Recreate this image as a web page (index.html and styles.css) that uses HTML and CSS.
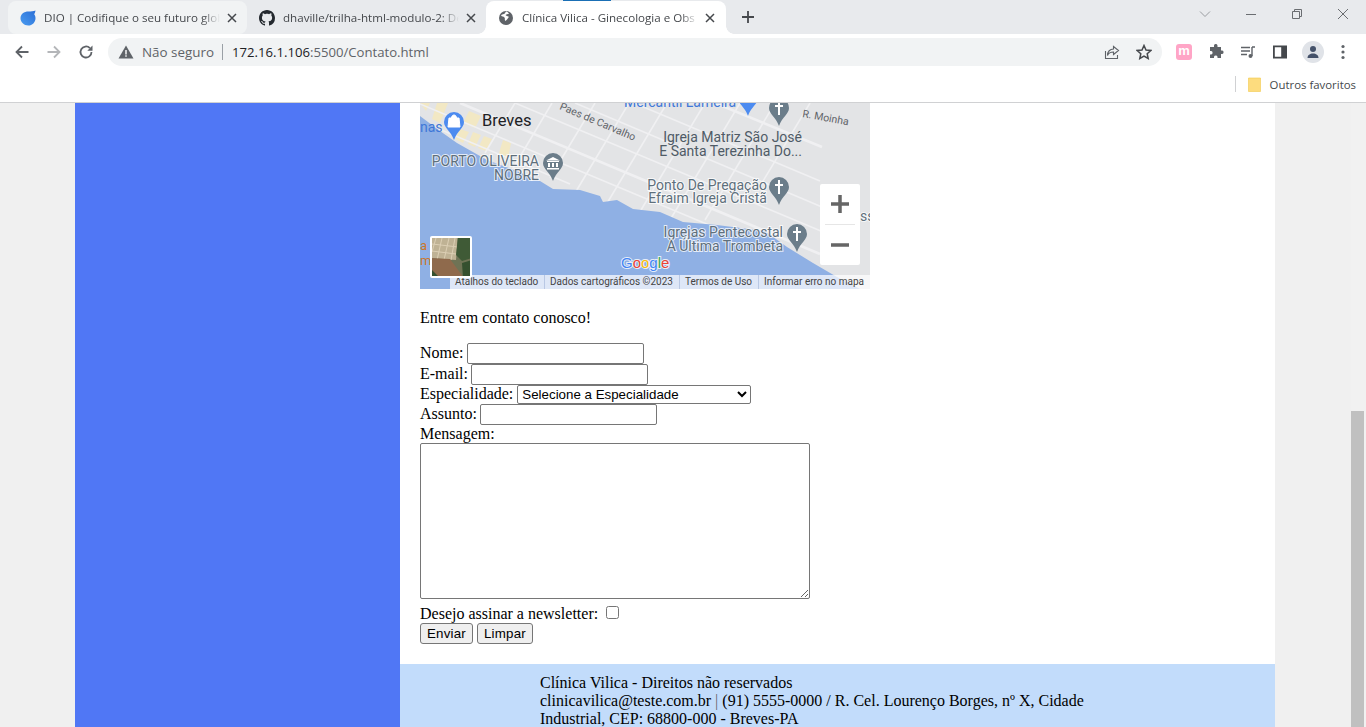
FILE: index.html
```html
<!DOCTYPE html>
<html lang="pt-BR">
<head>
    <meta charset="UTF-8">
    <title>Clínica Vilica - Contato</title>
    <link rel="stylesheet" href="styles.css">
</head>
<body>
<div class="browser">
    <div class="tabstrip">
        <div class="tab tab-hover">
            <svg class="favicon" viewBox="0 0 16 16"><defs><linearGradient id="dio" x1="0" y1="1" x2="1" y2="0"><stop offset="0" stop-color="#4a9cf0"/><stop offset="1" stop-color="#2b6fd6"/></linearGradient></defs><path fill="url(#dio)" d="M15.5.5c-.3 1.800-.8 3-1.300 3.700 1 1.200 1.300 2.600 1.300 4 0 4-3.200 7.300-7.300 7.300C4 15.500.5 12.300.5 8.300.5 4.200 4 1.500 8.500 1.500c2.500 0 5-.3 7-1z"/></svg>
            <span class="tab-title">DIO | Codifique o seu futuro glob</span>
            <svg class="tab-close" viewBox="0 0 10 10"><path d="M1 1l8 8M9 1L1 9" stroke="#45484c" stroke-width="1.500" fill="none"/></svg>
        </div>
        <div class="tab">
            <svg class="favicon" viewBox="0 0 16 16"><path fill="#24292f" d="M8 0C3.580 0 0 3.580 0 8c0 3.540 2.290 6.530 5.470 7.590.4.070.55-.17.55-.38 0-.19-.01-.82-.01-1.490-2.010.37-2.530-.49-2.690-.94-.09-.23-.48-.94-.82-1.130-.28-.15-.68-.52-.01-.53.63-.01 1.080.58 1.230.82.72 1.210 1.870.87 2.330.66.070-.52.28-.87.51-1.070-1.780-.2-3.640-.89-3.640-3.950 0-.87.31-1.590.82-2.150-.08-.2-.36-1.020.08-2.120 0 0 .67-.21 2.200.82.64-.18 1.320-.27 2-.27s1.360.09 2 .27c1.530-1.040 2.200-.82 2.200-.82.44 1.100.16 1.920.08 2.120.51.56.82 1.270.82 2.150 0 3.070-1.870 3.750-3.650 3.950.29.25.54.73.54 1.480 0 1.070-.01 1.930-.01 2.200 0 .21.15.46.55.38A8.010 8.010 0 0 0 16 8c0-4.420-3.580-8-8-8z"/></svg>
            <span class="tab-title">dhaville/trilha-html-modulo-2: De</span>
            <svg class="tab-close" viewBox="0 0 10 10"><path d="M1 1l8 8M9 1L1 9" stroke="#45484c" stroke-width="1.500" fill="none"/></svg>
        </div>
        <div class="tab tab-active">
            <span class="load-bar"></span>
            <svg class="favicon" viewBox="0 0 16 16"><circle cx="8" cy="8" r="7" fill="#5f6368"/><path fill="#fff" d="M8 1.500c-1 1-.5 2-2 2.500s-2 0-3 1.500c1 1.500 2.500.5 3.500 2s-.5 2 1 3.500c1-1 2-2 3-3.500s-1.500-1-2.500-2 1.500-1.500 3-1.500C10 2 9 1.500 8 1.500z"/></svg>
            <span class="tab-title">Clínica Vilica - Ginecologia e Obs</span>
            <svg class="tab-close" viewBox="0 0 10 10"><path d="M1 1l8 8M9 1L1 9" stroke="#45484c" stroke-width="1.500" fill="none"/></svg>
        </div>
        <span class="new-tab">
            <svg viewBox="0 0 14 14"><path d="M7 1v12M1 7h12" stroke="#45484c" stroke-width="1.800" fill="none"/></svg>
        </span>
        <div class="window-controls">
            <svg viewBox="0 0 14 14"><path d="M2 4.500l5 5 5-5" stroke="#9a9da1" fill="none"/></svg>
            <svg viewBox="0 0 14 14"><path d="M2 7.500h10" stroke="#6a6d71" fill="none"/></svg>
            <svg viewBox="0 0 14 14"><path d="M2.500 4.500h7v7h-7zM4.500 4.500v-2h7v7h-2" stroke="#6a6d71" fill="none"/></svg>
            <svg viewBox="0 0 14 14"><path d="M2 2l10 10M12 2L2 12" stroke="#6a6d71" fill="none"/></svg>
        </div>
    </div>

    <div class="toolbar">
        <svg class="nav-icon" viewBox="0 0 16 16"><path d="M14.500 8H2.500M8 2.500L2.500 8 8 13.500" stroke="#5f6368" stroke-width="1.800" fill="none"/></svg>
        <svg class="nav-icon" viewBox="0 0 16 16"><path d="M1.500 8h12M8 2.500L13.500 8 8 13.500" stroke="#b4b6b9" stroke-width="1.800" fill="none"/></svg>
        <svg class="nav-icon" viewBox="0 0 16 16"><path d="M13.500 8a5.500 5.500 0 1 1-1.600-3.900" stroke="#5f6368" stroke-width="1.800" fill="none"/><path d="M14.500 1.500v5.200H9.300z" fill="#5f6368"/></svg>
        <div class="omnibox">
            <svg class="warn" viewBox="0 0 16 16"><path d="M8 1.500L15.500 14.500H.5z" fill="#5f6368"/><path d="M7.300 6h1.400v4.500H7.300zM7.300 11.300h1.400v1.400H7.300z" fill="#fff"/></svg>
            <span class="secure">Não seguro</span>
            <span class="omni-sep"></span>
            <span class="url"><b>172.16.1.106</b>:5500/Contato.html</span>
            <svg class="omni-icon share" viewBox="0 0 16 16"><path d="M1.500 7v7.500h12V11M9.500 2.500l5 4-5 4V8C6.500 8 4.500 9 3.500 11.500 3.500 7.500 6 5 9.500 5z" stroke="#5f6368" stroke-width="1.100" fill="none"/></svg>
            <svg class="omni-icon star" viewBox="0 0 16 16"><path d="M8 1.500l2 4.500 4.800.5-3.600 3.200 1 4.800L8 12.100l-4.200 2.400 1-4.800L1.200 6.500 6 6z" stroke="#45484c" stroke-width="1.500" fill="none"/></svg>
        </div>
        <span class="ext-m">m</span>
        <svg class="tool-icon" viewBox="0 0 16 16"><path fill="#5f6368" d="M6 1.500a1.800 1.800 0 0 1 3.500 0V3H13v3.500h1.200a1.800 1.800 0 0 1 0 3.500H13v4H9.500v-1.200a1.800 1.800 0 0 0-3.500 0V14H2v-3.500h1.200a1.800 1.800 0 0 0 0-3.500H2V3h4z"/></svg>
        <svg class="tool-icon" viewBox="0 0 16 16"><path d="M1 3.500h9M1 7h9M1 10.500h6" stroke="#5f6368" stroke-width="1.400" fill="none"/><path d="M12 3h3M12 3v9" stroke="#5f6368" stroke-width="1.400" fill="none"/><circle cx="10.500" cy="12" r="2" fill="#5f6368"/></svg>
        <svg class="tool-icon" viewBox="0 0 16 16"><path fill="#45484c" fill-rule="evenodd" d="M1 1.500h14v13H1zM2.800 3.200v9.600h6.400V3.200z"/></svg>
        <span class="avatar">
            <svg viewBox="0 0 16 16"><circle cx="8" cy="5" r="3" fill="#45526a"/><path d="M2.500 14c0-3 2.500-4.500 5.500-4.500s5.500 1.500 5.500 4.500z" fill="#45526a"/></svg>
        </span>
        <svg class="tool-icon menu-dots" viewBox="0 0 16 16"><circle cx="8" cy="2.500" r="1.600" fill="#5f6368"/><circle cx="8" cy="8" r="1.600" fill="#5f6368"/><circle cx="8" cy="13.500" r="1.600" fill="#5f6368"/></svg>
    </div>

    <div class="bookmarks">
        <span class="bm-sep"></span>
        <svg class="bm-folder" viewBox="0 0 13 15"><path d="M.5 1h12v13.500H.5z" fill="#fddc7e" stroke="#f2c94c" stroke-width=".6"/></svg>
        <span class="bm-label">Outros favoritos</span>
    </div>
</div>

<div class="viewport">
    <div class="page">
        <aside class="sidebar"></aside>
        <main class="content">
            <div class="map">
                <svg viewBox="0 0 450 186" width="450" height="186">
                    <defs>
                        <path id="pin" d="M-10 0a10 10 0 0 1 20 0c0 6-7 9-10 18-3-9-10-12-10-18z"/>
                        <g id="cross"><path d="M-1-7h2V7h-2zM-4-3h8v2h-8z" fill="#fff"/></g>
                        <clipPath id="thumb-clip"><rect x="12" y="135" width="38" height="38"/></clipPath>
                    </defs>
                    <rect width="450" height="186" fill="#e3e4e6"/>
                    <g fill="#f2e8c4">
                        <path d="M0 0h10l-4 8zM17 0h11l-8 20-8-4zM49 8l12 5-6 12-12-5zM40 26l9 3-6 11-8-4zM53 29l8 3-6 12-7-3zM64 33l8 3-6 12-8-3zM83 37l8 3-3 16-10-3z"/>
                    </g>
                    <g class="road">
                        <path d="M0 18L150 81M0 1L320 135M95 0L420 136M155 0L402 104M214 0L400 78"/>
                        <path d="M95 0L65 50M132 0L92 67M175 0L130 75M209 0L155 90M247 0L180 112M285 0L218 112M320 0L250 117M355 0L285 117M390 0L340 83"/>
                    </g>
                    <g class="road road-main">
                        <path d="M40 0L400 151M295 0L402 44"/>
                    </g>
                    <path d="M0 13L20 28 37 40 67 57 97 68 120 78 133 86 160 87 180 93 183 99 197 97 213 106 240 109 263 119 297 122 345 128 367 144 393 160 417 174 440 186H0z" fill="#8fb0e4"/>
                    <g class="map-label">
                        <text x="62" y="23" class="m-city">Breves</text>
                        <text transform="translate(139 6) rotate(23)" class="m-road">Paes de Carvalho</text>
                        <text x="204" y="4" class="m-poi-blue">Mercantil Lameira</text>
                        <text transform="translate(382 14) rotate(10)" class="m-road">R. Moinha</text>
                        <text x="382" y="39" text-anchor="end" class="m-poi-dark">Igreja Matriz São José</text>
                        <text x="382" y="53" text-anchor="end" class="m-poi-dark">E Santa Terezinha Do...</text>
                        <text x="119" y="63" text-anchor="end" class="m-poi">PORTO OLIVEIRA</text>
                        <text x="119" y="77" text-anchor="end" class="m-poi">NOBRE</text>
                        <text x="347" y="87" text-anchor="end" class="m-poi">Ponto De Pregação</text>
                        <text x="347" y="100" text-anchor="end" class="m-poi">Efraim Igreja Cristã</text>
                        <text x="363" y="134" text-anchor="end" class="m-poi">Igrejas Pentecostal</text>
                        <text x="363" y="148" text-anchor="end" class="m-poi">A Última Trombeta</text>
                        <text x="0" y="29" class="m-poi-blue">nas</text>
                        <text x="440" y="118" class="m-poi">ss</text>
                        <text x="0" y="147" class="m-orange">a</text>
                        <text x="0" y="162" class="m-orange">m</text>
                    </g>
                    <use href="#pin" x="34" y="19" fill="#4c8bf0"/>
                    <path d="M29 15h10l1 9H28zM31.500 15c0-4 5-4 5 0" fill="#fff" stroke="#fff"/>
                    <use href="#pin" x="133" y="60" fill="#6b7d8a"/>
                    <path d="M133 54l7 3.500h-14zM127 58h12v1h-12zM128 60h2v4h-2zM132 60h2v4h-2zM136 60h2v4h-2zM127 65h12v1.500h-12z" fill="#fff"/>
                    <use href="#pin" x="328" y="-5" fill="#4c8bf0"/>
                    <use href="#pin" x="359" y="5" fill="#6b7d8a"/>
                    <use href="#cross" x="359" y="5"/>
                    <use href="#pin" x="359" y="84" fill="#6b7d8a"/>
                    <use href="#cross" x="359" y="84"/>
                    <use href="#pin" x="377" y="131" fill="#6b7d8a"/>
                    <use href="#cross" x="377" y="131"/>
                    <text x="201" y="165" class="m-google"><tspan fill="#4285f4">G</tspan><tspan fill="#ea4335">o</tspan><tspan fill="#fbbc05">o</tspan><tspan fill="#4285f4">g</tspan><tspan fill="#34a853">l</tspan><tspan fill="#ea4335">e</tspan></text>
                    <rect x="30" y="172" width="420" height="14" fill="#fff" fill-opacity=".7"/>
                    <g class="m-attrib">
                        <text x="35" y="182">Atalhos do teclado</text>
                        <text x="130" y="182">Dados cartográficos ©2023</text>
                        <text x="265" y="182">Termos de Uso</text>
                        <text x="344" y="182">Informar erro no mapa</text>
                    </g>
                    <path d="M124.500 172v14M259.500 172v14M338.500 172v14" stroke="#b9c8e4"/>
                    <rect x="10" y="133" width="42" height="42" rx="2" fill="#fff"/>
                    <g clip-path="url(#thumb-clip)">
                        <g class="thumb-photo">
                            <rect x="10" y="133" width="42" height="42" fill="#6f7355"/>
                            <path d="M10 133h28l-2 24-26-2z" fill="#bfb294"/>
                            <path d="M16 135l-4 14M22 135l-5 22M29 135l-5 22M35 135l-4 22M12 141l26 3M12 148l24 3" stroke="#dccfb4" fill="none"/>
                            <path d="M38 133h14v22l-10 3-6-6z" fill="#3f5a36"/>
                            <path d="M10 155l20 1 14 19H18l-8-8z" fill="#8f6a4c"/>
                            <path d="M10 165l10 10H10zM42 160l10-3v18h-9z" fill="#35502f"/>
                        </g>
                    </g>
                    <rect x="400" y="81" width="40" height="81" rx="2" fill="#fff"/>
                    <path d="M405 121.500h30" stroke="#e6e6e6"/>
                    <path d="M411 101h18M420 92v18M411 142h18" stroke="#666" stroke-width="3.500"/>
                </svg>
            </div>
            <p class="intro">Entre em contato conosco!</p>
            <form class="contact-form" onsubmit="return false">
                <label>Nome:</label> <input type="text" class="field"><br>
                <label>E-mail:</label> <input type="text" class="field"><br>
                <label>Especialidade:</label>
                <select class="field-select">
                    <option>Selecione a Especialidade</option>
                </select><br>
                <label>Assunto:</label> <input type="text" class="field"><br>
                <label>Mensagem:</label><br>
                <textarea class="message"></textarea>
                <label>Desejo assinar a newsletter:</label> <input type="checkbox" class="news"><br>
                <button type="submit" class="btn">Enviar</button>
                <button type="reset" class="btn">Limpar</button>
            </form>
            <footer class="footer">
                <div class="footer-text">
                    Clínica Vilica - Direitos não reservados<br>
                    clinicavilica@teste.com.br <span class="pipe">|</span> (91) 5555-0000 / R. Cel. Lourenço Borges, nº X, Cidade Industrial, CEP: 68800-000 - Breves-PA
                </div>
            </footer>
        </main>
    </div>
    <div class="scrollbar"><div class="thumb"></div></div>
</div>
</body>
</html>
```

FILE: styles.css
```css
* {
    box-sizing: border-box;
}

html, body {
    margin: 0;
    height: 727px;
    overflow: hidden;
}

body {
    font-family: "Liberation Serif", serif;
    font-size: 16px;
    color: #000;
    background: #fff;
}

/* browser chrome */
.browser {
    height: 103px;
    border-bottom: 1px solid #d0d1d3;
    font-family: "Open Sans", "Liberation Sans", sans-serif;
}

.tabstrip {
    display: flex;
    height: 34px;
    padding: 1px 0 0 8px;
    background: #e8eaed;
}

.tab {
    display: flex;
    flex: none;
    align-items: center;
    position: relative;
    width: 239px;
    padding: 0 7px 0 12px;
    font-size: 11.600px;
    color: #45484c;
    border-radius: 8px;
}

.tab-hover {
    background: #f1f3f4;
}

.tab-active {
    width: 240px;
    padding-right: 8px;
    background: #fff;
    border-radius: 8px 8px 0 0;
}

.tab-active::before,
.tab-active::after {
    content: "";
    position: absolute;
    bottom: 0;
    width: 8px;
    height: 8px;
}

.tab-active::before {
    left: -8px;
    background: radial-gradient(circle at 0 0, transparent 7.500px, #fff 8px);
}

.tab-active::after {
    right: -8px;
    background: radial-gradient(circle at 100% 0, transparent 7.500px, #fff 8px);
}

.load-bar {
    position: absolute;
    top: -1px;
    left: 77px;
    width: 48px;
    height: 1px;
    background: #1a6fb5;
}

.favicon {
    width: 16px;
    height: 16px;
    flex: none;
    margin-right: 8px;
}

.tab-title {
    flex: 1;
    min-width: 0;
    white-space: nowrap;
    -webkit-mask-image: linear-gradient(90deg, #000 90%, transparent);
    mask-image: linear-gradient(90deg, #000 90%, transparent);
}

.tab-close {
    flex: none;
    width: 10px;
    height: 10px;
    margin: 0 3px 0 7px;
}

.new-tab {
    width: 14px;
    height: 14px;
    margin: 9px 0 0 15px;
}

.new-tab svg {
    display: block;
}

.window-controls {
    display: flex;
    gap: 32px;
    margin-left: auto;
    padding: 6px 16px 0 0;
}

.window-controls svg {
    width: 14px;
    height: 14px;
}

.toolbar {
    display: flex;
    align-items: center;
    height: 36px;
    padding-left: 14px;
    background: #fff;
}

.nav-icon {
    width: 16px;
    height: 16px;
    margin-right: 16px;
}

.omnibox {
    display: flex;
    align-items: center;
    width: 1054px;
    height: 28px;
    margin-left: -2px;
    padding: 0 10px;
    border-radius: 14px;
    background: #f1f3f4;
    font-size: 13.400px;
    color: #5f6368;
}

.warn {
    width: 16px;
    height: 16px;
    margin-right: 8px;
}

.omni-sep {
    width: 1px;
    height: 16px;
    margin: 0 9px 0 8px;
    background: #9aa0a6;
}

.url {
    flex: 1;
    font-size: 13.150px;
    color: #5f6368;
}

.url b {
    font-weight: 400;
    color: #202124;
}

.omni-icon {
    width: 16px;
    height: 16px;
}

.share {
    margin-right: 16px;
}

.ext-m {
    width: 16px;
    height: 16px;
    margin-left: 14px;
    border-radius: 3px;
    background: #ffa5c6;
    color: #fff;
    font: 700 13px/14px "Liberation Sans", sans-serif;
    text-align: center;
}

.tool-icon {
    width: 16px;
    height: 16px;
    margin-left: 16px;
}

.avatar {
    width: 22px;
    height: 22px;
    margin-left: 14px;
    padding: 3px;
    border-radius: 50%;
    background: #e0e3e8;
}

.avatar svg {
    display: block;
}

.menu-dots {
    margin-left: 11px;
}

.bookmarks {
    display: flex;
    align-items: center;
    justify-content: flex-end;
    height: 32px;
    padding: 0 10px 4px 0;
    font-size: 11.400px;
    color: #45484c;
}

.bm-sep {
    width: 1px;
    height: 16px;
    margin-right: 12px;
    background: #d0d1d3;
}

.bm-folder {
    width: 13px;
    height: 15px;
    margin-right: 9px;
}

/* page */
.viewport {
    display: flex;
    height: 624px;
    overflow: hidden;
    background: #f0f0f0;
}

.page {
    display: flex;
    flex: none;
    width: 1200px;
    margin-left: 75px;
    margin-right: 76px;
}

.sidebar {
    flex: none;
    width: 325px;
    background: #5077f5;
}

.content {
    flex: none;
    width: 875px;
    background: #fff;
}

.map {
    height: 186px;
    margin-left: 20px;
}

.map svg {
    display: block;
}

.road {
    fill: none;
    stroke: #f0f0f2;
    stroke-width: 1.600px;
}

.road-main {
    stroke-width: 2.600px;
}

.thumb-photo {
    filter: blur(.7px);
}

.map-label {
    font-family: Roboto, "Liberation Sans", sans-serif;
}

.m-city {
    font-size: 16.500px;
    fill: #202124;
}

.m-road {
    font-size: 10.500px;
    fill: #5f6368;
}

.m-poi-blue {
    font-size: 14px;
    fill: #3f78d8;
}

.m-poi-dark {
    font-size: 14px;
    fill: #4f5b66;
}

.m-poi {
    font-size: 14px;
    fill: #5e6f7c;
    stroke: #fff;
    stroke-width: 2px;
    stroke-opacity: .75;
    paint-order: stroke;
}

.m-orange {
    font-size: 13px;
    fill: #c9772b;
}

.m-google {
    font: 15px "Liberation Sans", sans-serif;
    stroke: #fff;
    stroke-width: 2px;
    stroke-opacity: .8;
    paint-order: stroke;
}

.m-attrib {
    font: 10px Roboto, "Liberation Sans", sans-serif;
    fill: #444;
}

.intro {
    margin: 20px 0 16px 20px;
    line-height: 18px;
}

.contact-form {
    height: 321px;
    margin-left: 20px;
    line-height: 18px;
}

.field {
    width: 177px;
    height: 21px;
    margin-left: -1px;
    padding: 1px 2px;
    border: 1px solid #767676;
    border-radius: 2px;
    font: 13.333px "Liberation Sans", sans-serif;
}

.field-select {
    width: 234px;
    height: 19px;
    padding: 0;
    border: 1px solid #767676;
    border-radius: 2px;
    background: #fff;
    font: 13.333px "Liberation Sans", sans-serif;
}

.message {
    display: block;
    width: 390px;
    height: 156px;
    margin: 0 0 4px;
    border: 1px solid #767676;
    border-radius: 2px;
}

.news {
    width: 13px;
    height: 13px;
    margin: 3px 3px 3px 4px;
}

.btn {
    height: 21px;
    padding: 1px 6px;
    border: 1px solid #767676;
    border-radius: 3px;
    background: #efefef;
    font: 13.333px "Liberation Sans", sans-serif;
    letter-spacing: .2px;
    color: #000;
}

.footer {
    height: 90px;
    padding: 10px 0 0 140px;
    background: #c2dcfb;
}

.footer-text {
    width: 560px;
    line-height: 18px;
}

.pipe {
    color: #666;
}

.scrollbar {
    flex: none;
    width: 15px;
    padding-top: 308px;
    background: #f1f1f1;
}

.thumb {
    width: 13px;
    height: 316px;
    background: #c0c0c0;
}
```
